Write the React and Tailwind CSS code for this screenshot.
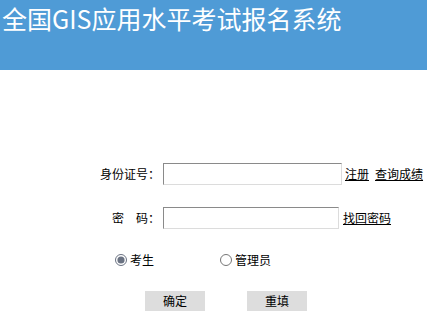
export default function App() {
  return (
    <div
      className="w-[427px] h-[324px] bg-white overflow-hidden text-black"
      style={{ fontFamily: '"Noto Sans CJK SC", "Noto Sans", sans-serif' }}
    >
      <div className="h-[70px] bg-[#4f9bd6] pl-[2px] pt-[1px]">
        <h1 className="text-[25px] leading-[34px] text-white font-normal">
          全国GIS应用水平考试报名系统
        </h1>
      </div>

      <div className="pt-[93px] text-[12px]">
        {/* 身份证号 */}
        <div className="flex items-center h-[22px]">
          <label className="w-[163px] text-right pr-[3px]">身份证号：</label>
          <input
            type="text"
            className="w-[179px] h-[22px] border border-t-[#8a8a8a] border-l-[#8a8a8a] border-b-[#dcdcdc] border-r-[#dcdcdc] outline-none"
          />
          <a href="#" className="ml-[3px] underline">注册</a>
          <a href="#" className="ml-[6px] underline">查询成绩</a>
        </div>

        {/* 密码 */}
        <div className="flex items-center h-[22px] mt-[22px]">
          <label className="w-[163px] text-right pr-[3px]">密　码：</label>
          <input
            type="password"
            className="w-[176px] h-[22px] border border-t-[#8a8a8a] border-l-[#8a8a8a] border-b-[#dcdcdc] border-r-[#dcdcdc] outline-none"
          />
          <a href="#" className="ml-[4px] underline">找回密码</a>
        </div>

        {/* 角色 */}
        <div className="flex items-center h-[14px] mt-[24px] pl-[115px]">
          <label className="flex items-center w-[105px]">
            <input type="radio" name="role" defaultChecked className="w-[12px] h-[12px] m-0 accent-gray-500" />
            <span className="ml-[3px]">考生</span>
          </label>
          <label className="flex items-center">
            <input type="radio" name="role" className="w-[12px] h-[12px] m-0" />
            <span className="ml-[3px]">管理员</span>
          </label>
        </div>

        {/* 按钮 */}
        <div className="flex mt-[24px] pl-[145px] gap-[42px]">
          <button className="w-[60px] h-[20px] bg-[#dddddd] text-[12px]">确定</button>
          <button className="w-[60px] h-[20px] bg-[#dddddd] text-[12px]">重填</button>
        </div>
      </div>
    </div>
  );
}
